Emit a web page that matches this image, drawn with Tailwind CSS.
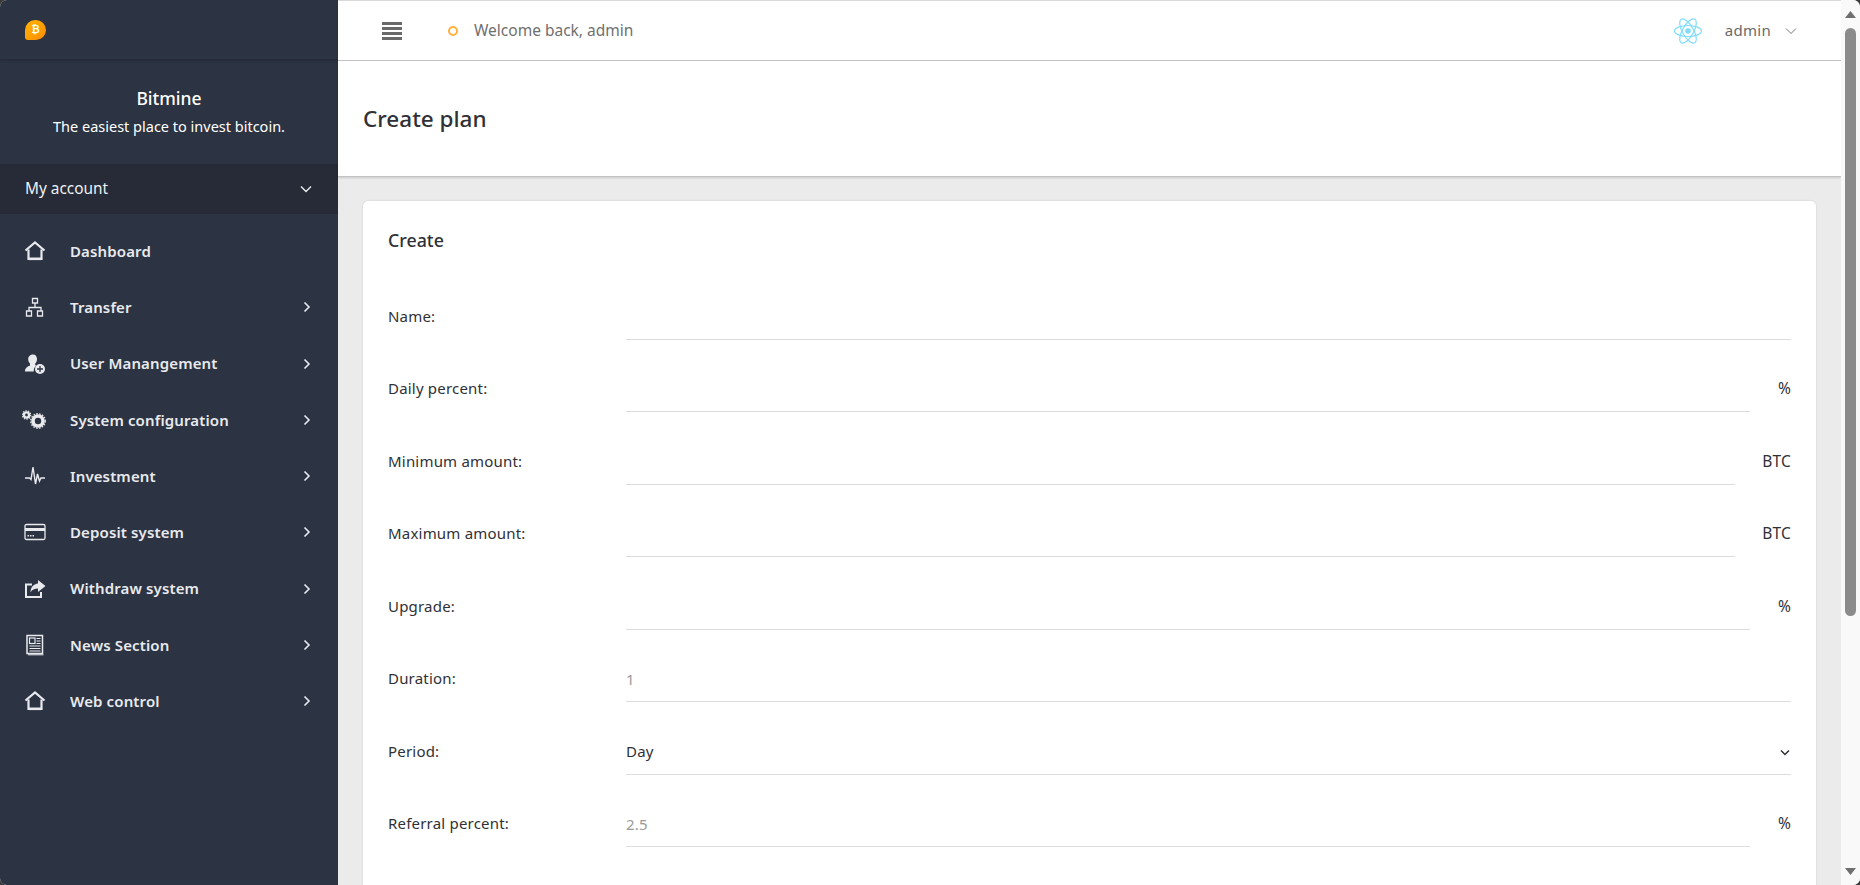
<!DOCTYPE html>
<html lang="en">
<head>
<meta charset="UTF-8">
<title>Create plan</title>
<script src="https://cdn.jsdelivr.net/npm/@tailwindcss/browser@4"></script>
</head>
<body class="h-[885px] overflow-hidden bg-[#3a3a3a] font-['Noto_Sans',sans-serif] text-[#2f3136]">
<div class="flex h-[885px] overflow-hidden rounded-[7px] bg-[#ebebeb]">

  <!-- Sidebar -->
  <aside class="w-[338px] shrink-0 bg-[#2c3342] text-[#eef0f3]">
    <div class="flex h-[60px] items-center border-b border-[#262b37] pl-[25px] shadow-[0_1px_2px_rgba(0,0,0,0.15)]">
      <div class="flex h-[20px] w-[21px] items-center justify-center rounded-[10px] rounded-bl-[3px] bg-gradient-to-br from-[#ffb400] to-[#ff8c00] font-['DejaVu_Sans',sans-serif] text-[10px] font-bold leading-none text-white">₿</div>
    </div>
    <div class="flex h-[104px] flex-col items-center pt-[26px] text-white">
      <div class="text-[17.5px] font-medium leading-[24px]">Bitmine</div>
      <div class="mt-[6px] text-[14.5px] leading-[20px]">The easiest place to invest bitcoin.</div>
    </div>
    <div class="flex h-[50px] items-center justify-between bg-[#262b37] pl-[25px] pr-[26px] text-[15.4px]">
      <span>My account</span>
      <svg class="h-[8px] w-[12px]" viewBox="0 0 12 8" fill="none" stroke="currentColor" stroke-width="1.3"><path d="M1 1.5l5 5 5-5"/></svg>
    </div>

    <nav class="pt-[9px] text-[15px] font-semibold tracking-[0.13px] text-[#e8eaee]">
      <a class="flex h-[56.25px] items-center pl-[24px] pr-[27px]">
        <svg class="mr-[24px] h-[22px] w-[22px]" viewBox="0 0 22 22" fill="none" stroke="currentColor" stroke-width="2.2"><path d="M1.500 10.500L11 2.500l9.500 8"/><path d="M4.500 9.500V19h13V9.500"/><path d="M5 18.800h12" stroke-width="2.600"/></svg>
        <span class="flex-1">Dashboard</span>
      </a>
      <a class="flex h-[56.25px] items-center pl-[24px] pr-[27px]">
        <svg class="mr-[24px] h-[22px] w-[22px]" viewBox="0 0 22 22" fill="none" stroke="currentColor" stroke-width="1.300"><path d="M8.500 2.500h5v4.500h-5zM2.500 15h5v5h-5zM13.500 15h5v5h-5zM11 7v4M5 15v-3.500h12V15"/></svg>
        <span class="flex-1">Transfer</span>
        <svg class="h-[12px] w-[8px]" viewBox="0 0 8 12" fill="none" stroke="currentColor" stroke-width="1.600"><path d="M1.500 1.500L6 6l-4.500 4.500"/></svg>
      </a>
      <a class="flex h-[56.25px] items-center pl-[24px] pr-[27px]">
        <svg class="mr-[24px] h-[22px] w-[22px]" viewBox="0 0 22 22"><path fill="currentColor" d="M9 1.500c2.500 0 4 2 4 4.500 0 2-.8 3.500-1.800 4.500v1.500l1 .7a6.500 6.500 0 0 0-2.400 5.800H1c0-3.500 2-4.800 5-6v-2c-1-1-1.800-2.500-1.800-4.500C4.200 3.500 6.500 1.500 9 1.500z"/><circle cx="16" cy="16" r="5" fill="currentColor"/><path d="M16 13v6M13 16h6" stroke="#2c3342" stroke-width="1.300"/></svg>
        <span class="flex-1">User Manangement</span>
        <svg class="h-[12px] w-[8px]" viewBox="0 0 8 12" fill="none" stroke="currentColor" stroke-width="1.600"><path d="M1.500 1.500L6 6l-4.500 4.500"/></svg>
      </a>
      <a class="flex h-[56.25px] items-center pl-[24px] pr-[27px]">
        <svg class="mr-[24px] h-[22px] w-[24px] -translate-x-[2px]" viewBox="0 0 24 22" fill="none" stroke="currentColor"><circle cx="4.500" cy="6" r="2.600" stroke-width="2.400"/><circle cx="4.500" cy="6" r="4.200" stroke-width="1.200" stroke-dasharray="1.300 1.300"/><circle cx="16" cy="12" r="5" stroke-width="3.600"/><circle cx="16" cy="12" r="7.200" stroke-width="1.400" stroke-dasharray="1.600 1.300"/></svg>
        <span class="flex-1 -ml-[2px]">System configuration</span>
        <svg class="h-[12px] w-[8px]" viewBox="0 0 8 12" fill="none" stroke="currentColor" stroke-width="1.600"><path d="M1.500 1.500L6 6l-4.500 4.500"/></svg>
      </a>
      <a class="flex h-[56.25px] items-center pl-[24px] pr-[27px]">
        <svg class="mr-[24px] h-[22px] w-[22px]" viewBox="0 0 22 22" fill="none" stroke="currentColor" stroke-width="1.400"><path d="M1 13h4.500l1.500 1.500L9 2l2.500 17 2-10 2 7 1.500-3h4"/></svg>
        <span class="flex-1">Investment</span>
        <svg class="h-[12px] w-[8px]" viewBox="0 0 8 12" fill="none" stroke="currentColor" stroke-width="1.600"><path d="M1.500 1.500L6 6l-4.500 4.500"/></svg>
      </a>
      <a class="flex h-[56.25px] items-center pl-[24px] pr-[27px]">
        <svg class="mr-[24px] h-[22px] w-[22px]" viewBox="0 0 22 22" fill="none" stroke="currentColor"><rect x="1" y="3.500" width="20" height="15" rx="1.500" stroke-width="1.300"/><path d="M1 8.500h20" stroke-width="3"/><path d="M3.500 14.800h1.500M6 14.800h1.500M8.500 14.800H10" stroke-width="1.500"/></svg>
        <span class="flex-1">Deposit system</span>
        <svg class="h-[12px] w-[8px]" viewBox="0 0 8 12" fill="none" stroke="currentColor" stroke-width="1.600"><path d="M1.500 1.500L6 6l-4.500 4.500"/></svg>
      </a>
      <a class="flex h-[56.25px] items-center pl-[24px] pr-[27px]">
        <svg class="mr-[24px] h-[22px] w-[22px]" viewBox="0 0 22 22"><path fill="none" stroke="currentColor" stroke-width="2" d="M8 6.500H2V19h15v-5"/><path fill="currentColor" d="M14 2l7.500 6-7.500 6v-3.500c-3.500 0-6 1-7.500 4 0-5 3-8.500 7.500-9z"/></svg>
        <span class="flex-1">Withdraw system</span>
        <svg class="h-[12px] w-[8px]" viewBox="0 0 8 12" fill="none" stroke="currentColor" stroke-width="1.600"><path d="M1.500 1.500L6 6l-4.500 4.500"/></svg>
      </a>
      <a class="flex h-[56.25px] items-center pl-[24px] pr-[27px]">
        <svg class="mr-[24px] h-[22px] w-[22px]" viewBox="0 0 22 22" fill="none" stroke="currentColor" stroke-width="1.200"><path d="M3 1.500h15.500v18H3z" stroke-width="1.500"/><path d="M4 20.800h15.500" stroke-width="1"/><rect x="5.500" y="4" width="5.500" height="5.500" stroke-width="1.200"/><path d="M12.500 4.500h4M12.500 7h4M12.500 9.500h4M5.500 12h11M5.500 14.500h11M5.500 17h11"/></svg>
        <span class="flex-1">News Section</span>
        <svg class="h-[12px] w-[8px]" viewBox="0 0 8 12" fill="none" stroke="currentColor" stroke-width="1.600"><path d="M1.500 1.500L6 6l-4.500 4.500"/></svg>
      </a>
      <a class="flex h-[56.25px] items-center pl-[24px] pr-[27px]">
        <svg class="mr-[24px] h-[22px] w-[22px]" viewBox="0 0 22 22" fill="none" stroke="currentColor" stroke-width="2.2"><path d="M1.500 10.500L11 2.500l9.500 8"/><path d="M4.500 9.500V19h13V9.500"/><path d="M5 18.800h12" stroke-width="2.600"/></svg>
        <span class="flex-1">Web control</span>
        <svg class="h-[12px] w-[8px]" viewBox="0 0 8 12" fill="none" stroke="currentColor" stroke-width="1.600"><path d="M1.500 1.500L6 6l-4.500 4.500"/></svg>
      </a>
    </nav>
  </aside>

  <!-- Main -->
  <main class="flex min-w-0 flex-1 flex-col border-t border-[#dcdcdc]">
    <header class="flex h-[60px] shrink-0 items-center justify-between border-b border-[#c4c4c4] bg-white shadow-[0_1px_2px_rgba(0,0,0,0.15)]">
      <div class="flex items-center">
        <div class="ml-[44px] flex w-[20px] flex-col gap-[2px]">
          <span class="h-[3px] bg-[#6a6a6a]"></span><span class="h-[3px] bg-[#6a6a6a]"></span><span class="h-[3px] bg-[#6a6a6a]"></span><span class="h-[3px] bg-[#6a6a6a]"></span>
        </div>
        <span class="ml-[46px] h-[10px] w-[10px] rounded-full border-[2.5px] border-[#ffb13d]"></span>
        <span class="ml-[16px] text-[15.5px] text-[#6f6f6f]">Welcome back, admin</span>
      </div>
      <div class="flex items-center pr-[44px]">
        <svg class="h-[30px] w-[30px]" viewBox="0 0 30 30" fill="none" stroke="#7fdcfb" stroke-width="1.200"><circle cx="15" cy="15" r="2.800" fill="#7fdcfb" stroke="none"/><ellipse cx="15" cy="15" rx="13.500" ry="5.500"/><ellipse cx="15" cy="15" rx="13.500" ry="5.500" transform="rotate(60 15 15)"/><ellipse cx="15" cy="15" rx="13.500" ry="5.500" transform="rotate(120 15 15)"/></svg>
        <span class="ml-[22px] text-[15px] tracking-[0.3px] text-[#6a6a6a]">admin</span>
        <svg class="ml-[14px] h-[8px] w-[12px]" viewBox="0 0 12 8" fill="none" stroke="#777" stroke-width="1"><path d="M1 1.500l5 5 5-5"/></svg>
      </div>
    </header>

    <div class="flex h-[116px] shrink-0 items-center border-b border-[#c4c4c4] bg-white pl-[25px] shadow-[0_1px_2px_rgba(0,0,0,0.15)]">
      <h1 class="text-[22.5px] font-medium text-[#2f3136]">Create plan</h1>
    </div>

    <div class="min-h-0 flex-1 overflow-hidden px-[25px] pt-[24px]">
      <section class="h-[800px] rounded-[5px] bg-white px-[25px] shadow-[0_0_2px_rgba(0,0,0,0.15)]">
        <h2 class="pt-[28px] text-[17.800px] font-medium leading-[22px]">Create</h2>
        <form class="pt-[16px] text-[15px] tracking-[0.2px]">
          <div class="flex h-[72.500px] items-end">
            <label class="w-[238px] pb-[13px] leading-[22px]">Name:</label>
            <input class="h-[40px] min-w-0 flex-1 border-b border-[#dddddd] pb-[6px] outline-none">
          </div>
          <div class="flex h-[72.500px] items-end">
            <label class="w-[238px] pb-[13px] leading-[22px]">Daily percent:</label>
            <input class="h-[40px] min-w-0 flex-1 border-b border-[#dddddd] pb-[6px] outline-none">
            <span class="w-[41px] pb-[13px] text-right text-[15.500px] leading-[22px]">%</span>
          </div>
          <div class="flex h-[72.500px] items-end">
            <label class="w-[238px] pb-[13px] leading-[22px]">Minimum amount:</label>
            <input class="h-[40px] min-w-0 flex-1 border-b border-[#dddddd] pb-[6px] outline-none">
            <span class="w-[56px] pb-[13px] text-right text-[15.500px] leading-[22px]">BTC</span>
          </div>
          <div class="flex h-[72.500px] items-end">
            <label class="w-[238px] pb-[13px] leading-[22px]">Maximum amount:</label>
            <input class="h-[40px] min-w-0 flex-1 border-b border-[#dddddd] pb-[6px] outline-none">
            <span class="w-[56px] pb-[13px] text-right text-[15.500px] leading-[22px]">BTC</span>
          </div>
          <div class="flex h-[72.500px] items-end">
            <label class="w-[238px] pb-[13px] leading-[22px]">Upgrade:</label>
            <input class="h-[40px] min-w-0 flex-1 border-b border-[#dddddd] pb-[6px] outline-none">
            <span class="w-[41px] pb-[13px] text-right text-[15.500px] leading-[22px]">%</span>
          </div>
          <div class="flex h-[72.500px] items-end">
            <label class="w-[238px] pb-[13px] leading-[22px]">Duration:</label>
            <input placeholder="1" class="h-[40px] min-w-0 flex-1 border-b border-[#dddddd] pb-[6px] outline-none placeholder:text-[#9a9a9a]">
          </div>
          <div class="flex h-[72.500px] items-end">
            <label class="w-[238px] pb-[13px] leading-[22px]">Period:</label>
            <div class="relative min-w-0 flex-1">
              <select class="h-[40px] w-full appearance-none border-b border-[#dddddd] bg-white pb-[6px] outline-none"><option>Day</option></select>
              <svg class="absolute right-[1px] top-[14px] h-[7px] w-[10px]" viewBox="0 0 10 7" fill="none" stroke="#2f3136" stroke-width="1.500"><path d="M1 1.500l4 4 4-4"/></svg>
            </div>
          </div>
          <div class="flex h-[72.500px] items-end">
            <label class="w-[238px] pb-[13px] leading-[22px]">Referral percent:</label>
            <input placeholder="2.5" class="h-[40px] min-w-0 flex-1 border-b border-[#dddddd] pb-[6px] outline-none placeholder:text-[#9a9a9a]">
            <span class="w-[41px] pb-[13px] text-right text-[15.500px] leading-[22px]">%</span>
          </div>
        </form>
      </section>
    </div>
  </main>

  <!-- Scrollbar -->
  <div class="flex w-[19px] shrink-0 flex-col items-center bg-[#f9f9f9]">
    <svg class="mt-[11px] h-[7px] w-[11px]" viewBox="0 0 11 7" fill="#6f6f6f"><path d="M5.500 0L11 7H0z"/></svg>
    <div class="mt-[10px] h-[588px] w-[11px] rounded-[6px] bg-[#8b8b8b]"></div>
    <svg class="mt-[252px] h-[7px] w-[11px]" viewBox="0 0 11 7" fill="#6f6f6f"><path d="M0 0h11L5.500 7z"/></svg>
  </div>
</div>
</body>
</html>
